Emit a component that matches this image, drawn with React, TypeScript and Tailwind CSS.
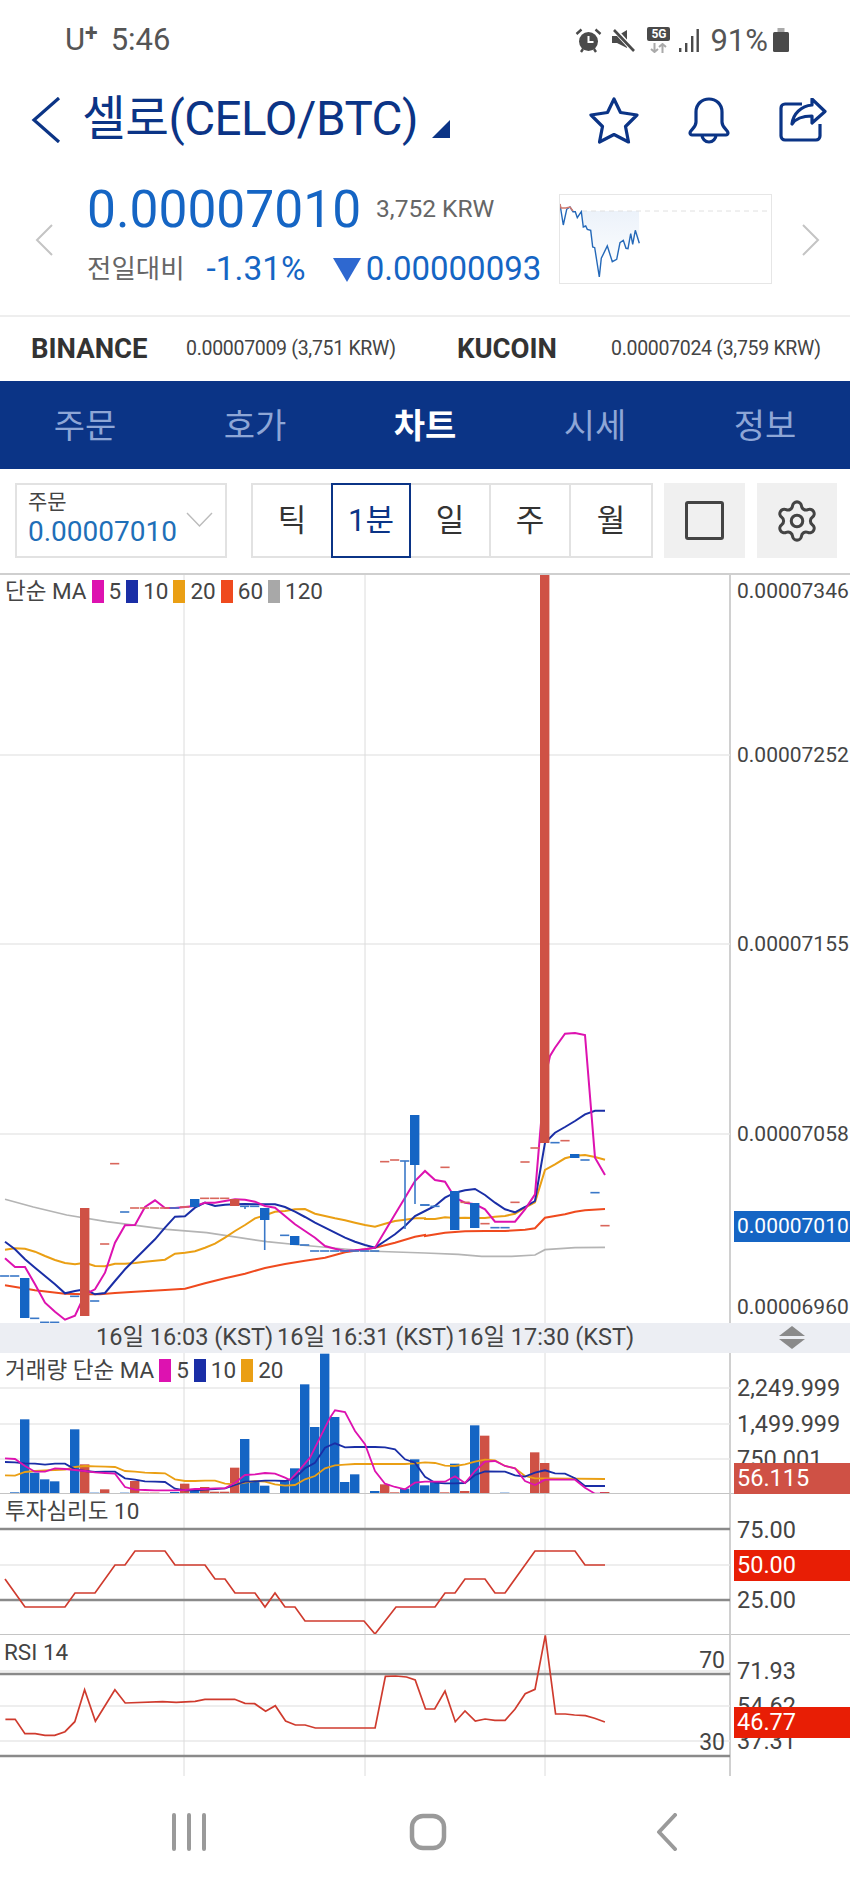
import { Settings } from "lucide-react";

const BLUE = "#1565c4";
const RED = "#cf5145";
const MA5 = "#dd12b0";
const MA10 = "#1a2ea6";
const MA20 = "#ea9f14";
const MA60 = "#ef4a1e";
const MA120 = "#b4b4b4";

type Pt = number[];

// chart points are read off the picture, each pane has its own scale
const main = (l: Pt[], r: Pt[] = []) => [
  ...l.map(([x, y]) => [x / 3, 1080 + y / 3]),
  ...r.map(([x, y]) => [425 + x / 3, 1000 + y / 3]),
];
const vol = (l: Pt[], r: Pt[] = []) => [
  ...l.map(([x, y]) => [x / 3, 1330 + y / 3]),
  ...r.map(([x, y]) => [425 + x / 3, 1330 + y / 3]),
];
const toPath = (p: number[][]) => p.map(([x, y]) => `${x.toFixed(1)},${y.toFixed(1)}`).join(" ");
const cx = (i: number) => 4.7 + 10 * i;

const priceMa5 = main(
  [[15,532],[45,558],[75,558],[105,610],[135,665],[165,692],[195,716],[225,704],[255,640],[285,625],[315,575],[345,485],[375,433],[405,432],[435,378],[465,358],[495,381],[525,381],[555,378],[585,375],[615,365],[645,365],[675,360],[705,355],[735,356],[765,362],[795,375],[825,380],[855,405],[885,430],[915,450],[945,470],[975,495],[1005,503],[1035,510],[1065,508],[1095,505],[1125,500],[1155,450],[1185,400],[1215,350],[1245,300],[1275,270]],
  [[0,510],[30,537],[60,542],[90,590],[120,605],[150,610],[180,625],[210,662],[240,662],[270,662],[300,625],[330,580],[345,400],[360,230],[375,165],[390,140],[420,98],[450,96],[480,102],[510,470],[540,522]]
);
const priceMa10 = main(
  [[15,482],[45,505],[75,535],[105,560],[135,585],[165,610],[195,637],[225,630],[255,625],[285,640],[315,636],[345,600],[375,565],[405,535],[435,505],[465,475],[495,440],[525,407],[555,406],[585,380],[615,365],[645,375],[675,371],[705,370],[735,369],[765,370],[795,370],[825,370],[855,378],[885,392],[915,408],[945,425],[975,440],[1005,455],[1035,470],[1065,482],[1095,492],[1125,500],[1155,480],[1185,460],[1215,435],[1245,405],[1275,390]],
  [[0,630],[30,615],[60,590],[90,575],[120,568],[150,564],[180,582],[210,605],[240,625],[270,634],[300,618],[330,600],[360,425],[390,395],[420,378],[450,360],[480,340],[510,329],[540,329]]
);
const priceMa20 = main(
  [[15,506],[45,502],[75,503],[105,512],[135,525],[165,537],[195,546],[225,550],[255,545],[285,555],[315,556],[345,548],[375,548],[405,546],[435,542],[465,539],[495,536],[525,518],[555,515],[585,511],[615,500],[645,488],[675,470],[705,450],[735,432],[765,412],[795,403],[825,392],[855,390],[885,385],[915,384],[945,398],[975,405],[1005,412],[1035,418],[1065,425],[1095,432],[1125,437],[1155,428],[1185,420],[1215,416],[1245,412],[1275,412]],
  [[0,654],[30,654],[60,649],[90,651],[120,650],[150,651],[180,651],[210,647],[240,645],[270,638],[300,620],[330,604],[360,507],[390,490],[420,472],[450,464],[480,462],[510,468],[540,476]]
);
const priceMa60 = main(
  [[15,613],[60,620],[105,628],[150,633],[195,638],[255,640],[300,640],[345,636],[405,632],[495,627],[555,623],[615,607],[675,592],[735,578],[795,561],[855,549],[915,539],[975,530],[1035,514],[1095,505],[1125,500],[1185,485],[1245,467],[1275,462]],
  [[0,705],[60,695],[120,691],[180,690],[240,690],[300,686],[330,682],[360,650],[420,640],[450,632],[480,628],[540,624]]
);
const priceMa120 = main(
  [[15,355],[100,378],[200,402],[320,422],[500,445],[620,455],[800,482],[900,492],[1100,510],[1275,516]],
  [[100,760],[170,766],[260,766],[330,762],[360,746],[450,740],[540,739]]
);

// x index, top, bottom
const candles: [number, number, number, string][] = [
  [2, 1277, 1317, BLUE],
  [8, 1207, 1315, RED],
  [19, 1198, 1206, BLUE],
  [23, 1198, 1205, RED],
  [26, 1207, 1219, BLUE],
  [29, 1235, 1244, BLUE],
  [41, 1114, 1164, BLUE],
  [45, 1190, 1229, BLUE],
  [47, 1202, 1227, BLUE],
  [54, 573, 1142, RED],
  [57, 1153, 1157, BLUE],
];
const wicks = [
  [264.7, 1207, 1249],
  [405, 1160, 1228],
  [415, 1164, 1203],
  [245, 1205, 1208],
];
const dashes: [number, number, string][] = [
  ...[[14,585],[44,585],[104,712],[134,724],[164,724],[224,646],[284,660],[374,393],[524,381],[734,376],[764,376],[854,463],[914,492],[944,510],[974,510],[1004,510],[1034,510],[1064,510],[1094,510],[1124,510],[1214,240],[1274,372]].map(
    ([x, y]) => [x / 3, 1080 + y / 3, "#3a78c8"] as [number, number, string]
  ),
  ...[[344,248],[314,489],[404,381],[434,381],[464,381],[494,381],[554,378],[614,352],[644,352],[674,352],[1154,242],[1184,237]].map(
    ([x, y]) => [x / 3, 1080 + y / 3, "#d9665b"] as [number, number, string]
  ),
  ...[[0,612],[30,616],[210,680],[240,680],[390,425],[480,477],[510,575]].map(
    ([x, y]) => [425 + x / 3, 1000 + y / 3, "#3a78c8"] as [number, number, string]
  ),
  ...[[60,499],[120,604],[180,668],[270,604],[300,483],[330,441],[420,419],[540,674]].map(
    ([x, y]) => [425 + x / 3, 1000 + y / 3, "#d9665b"] as [number, number, string]
  ),
];

const volumeBars: [number, number, string][] = [
  [1,484,BLUE],[2,265,BLUE],[3,425,BLUE],[4,445,BLUE],[5,451,BLUE],[7,295,BLUE],[8,400,RED],[9,485,BLUE],[10,475,RED],[12,485,BLUE],[13,450,RED],[14,485,RED],[15,485,RED],[17,483,BLUE],[18,458,RED],[19,478,BLUE],[20,468,RED],[21,482,RED],[22,482,RED],[23,410,RED],[24,324,BLUE],[25,452,BLUE],[26,464,BLUE],[28,448,BLUE],[29,412,BLUE],[30,160,BLUE],[31,288,BLUE],[32,68,BLUE],[33,258,BLUE],[34,453,BLUE],[35,430,BLUE],[37,480,BLUE],[38,460,RED],[39,484,RED],[40,473,BLUE],[41,385,BLUE],[42,463,BLUE],[43,450,BLUE],[44,484,RED],[45,398,BLUE],[46,480,RED],[47,283,BLUE],[48,314,RED],[49,486,BLUE],[50,485,BLUE],[53,364,RED],[54,396,RED],[55,488,BLUE],[57,488,BLUE],[58,488,BLUE],[59,488,BLUE],[60,483,RED],
];
const volMa5 = vol(
  [[15,382],[45,384],[75,405],[105,422],[135,422],[165,412],[195,414],[225,417],[255,420],[285,424],[315,426],[345,428],[375,468],[405,476],[435,477],[465,478],[495,478],[525,478],[555,477],[585,474],[615,474],[645,472],[675,472],[705,455],[735,432],[765,430],[795,426],[825,428],[855,440],[870,447],[900,415],[930,380],[960,320],[990,260],[1005,238],[1035,243],[1065,300],[1095,340],[1125,420],[1155,458],[1185,468],[1215,475],[1245,455],[1275,452]],
  [[30,452],[60,452],[90,436],[120,456],[150,420],[180,392],[210,390],[240,405],[270,412],[300,450],[330,462],[360,446],[450,446],[480,470],[510,488],[540,488]]
);
const volMa10 = vol(
  [[15,393],[45,394],[75,397],[105,398],[135,401],[165,398],[195,398],[225,415],[255,420],[285,423],[315,422],[345,422],[375,442],[405,446],[435,451],[465,452],[495,453],[525,473],[555,478],[585,478],[615,476],[645,474],[675,472],[705,462],[735,452],[765,451],[795,449],[825,449],[855,450],[885,440],[915,412],[945,395],[975,350],[1005,337],[1035,349],[1065,348],[1095,348],[1125,348],[1155,349],[1185,355],[1215,385],[1245,395],[1275,437]],
  [[30,455],[60,457],[90,457],[120,456],[150,432],[180,421],[240,422],[270,433],[300,437],[330,425],[360,418],[390,427],[420,428],[450,442],[480,465],[540,465]]
);
const volMa20 = vol(
  [[15,433],[45,434],[75,423],[105,420],[135,418],[165,417],[195,416],[225,408],[255,405],[285,406],[315,407],[345,408],[375,420],[405,422],[435,425],[465,426],[495,427],[525,445],[555,450],[585,450],[615,449],[645,449],[675,458],[705,460],[735,455],[765,450],[795,452],[825,460],[855,464],[885,462],[915,445],[945,435],[975,412],[1005,403],[1035,401],[1065,399],[1095,399],[1125,399],[1155,399],[1185,399],[1215,399],[1245,397],[1275,394]],
  [[30,396],[60,404],[90,405],[120,400],[150,392],[180,386],[210,388],[240,405],[270,412],[300,435],[330,442],[360,442],[540,444]]
);

const sentiment = [
  [5,1578],[25,1606],[65,1606],[75,1592],[95,1592],[115,1564],[125,1564],[135,1550],[165,1550],[175,1564],[205,1564],[215,1578],[225,1578],[235,1592],[255,1592],[265,1606],[275,1592],[285,1606],[295,1606],[305,1620],[364,1620],[375,1633],[396,1606],[435,1606],[445,1592],[455,1592],[465,1578],[485,1578],[495,1592],[505,1592],[535,1550],[575,1550],[585,1564],[605,1564],
];
const rsi = [
  [10,355],[28,355],[46,398],[65,398],[83,403],[101,403],[120,392],[138,362],[156,266],[176,361],[212,266],[231,306],[300,302],[325,304],[360,301],[378,295],[433,295],[452,307],[470,308],[490,331],[508,314],[527,360],[545,372],[563,372],[582,381],[692,381],[711,226],[730,225],[750,228],[766,237],[785,324],[802,324],[821,270],[840,362],[858,330],[877,360],[895,354],[913,358],[932,358],[950,325],[969,278],[987,265],[1006,103],[1025,339],[1043,339],[1060,342],[1080,344],[1097,352],[1116,363],
].map(([x, y]) => [x / 1.845, 1600 + y / 3]);

const spark = [
  [58,70],[68,132],[78,85],[88,78],[97,92],[104,92],[110,110],[122,92],[128,138],[135,135],[140,145],[150,148],[156,198],[162,200],[176,288],[182,232],[200,195],[215,242],[228,235],[238,185],[248,178],[256,202],[262,203],[270,158],[276,190],[284,148],[296,187],
].map(([x, y]) => [(x - 58) / 3, (y - 42) / 3]);

function Grid({ top, bottom, rows }: { top: number; bottom: number; rows: number[] }) {
  return (
    <g>
      {rows.map((y) => (
        <line key={y} x1="0" x2="730" y1={y} y2={y} stroke="#e8e8e8" strokeWidth="1.5" />
      ))}
      {[184, 365, 545].map((x) => (
        <line key={x} x1={x} x2={x} y1={top} y2={bottom} stroke="#dcdcdc" strokeWidth="1" />
      ))}
    </g>
  );
}

function Legend({ items }: { items: [string, string][] }) {
  return (
    <>
      {items.map(([color, label]) => (
        <span key={label} className="flex items-center">
          <span className="mx-[5px] h-[23px] w-[12px]" style={{ backgroundColor: color }} />
          {label}
        </span>
      ))}
    </>
  );
}

function AxisLabel({ top, small, children }: { top: number; small?: boolean; children: string }) {
  return (
    <span
      className={`absolute left-[6px] leading-[26px] text-[#444] ${small ? "text-[21px]" : "text-[23.5px]"}`}
      style={{ top: top - 13 }}
    >
      {children}
    </span>
  );
}

function Tag({ top, color, small, children }: { top: number; color: string; small?: boolean; children: string }) {
  return (
    <span
      className={`absolute left-[3px] right-0 flex h-[31px] items-center pl-[3px] text-white ${small ? "text-[21px]" : "text-[23.5px]"}`}
      style={{ top, backgroundColor: color }}
    >
      {children}
    </span>
  );
}

export default function App() {
  return (
    <div className="h-[1889px] w-[850px] overflow-hidden bg-white [font-family:Roboto,'Noto_Sans_CJK_KR',sans-serif]">
      {/* Status bar */}
      <div className="flex h-[80px] items-center justify-between pl-[65px] pr-[61px] text-[#555]">
        <div className="flex items-center text-[31px]">
          <span>U</span>
          <span className="mb-[12px] text-[23px] font-bold">+</span>
          <span className="ml-[13px]">5:46</span>
        </div>
        <div className="flex items-center">
          <svg width="27" height="25" viewBox="0 0 27 25" fill="#4a4a4a">
            <circle cx="13.5" cy="13.5" r="9.5" />
            <path d="M13.5 8v6h5" stroke="#fff" strokeWidth="2" fill="none" />
            <path d="M1.5 6l5-4.5M25.5 6l-5-4.5M6 24l2-3M21 24l-2-3" stroke="#4a4a4a" strokeWidth="2.4" fill="none" />
          </svg>
          <svg className="ml-[10px]" width="23" height="23" viewBox="0 0 23 23" fill="#4a4a4a">
            <path d="M0 7h5L15 1v18L5 14H0z" />
            <path d="M2 0l20 22" stroke="#fff" strokeWidth="5" />
            <path d="M2 1l20 21" stroke="#4a4a4a" strokeWidth="2.6" />
          </svg>
          <div className="ml-[12px] flex w-[23px] flex-col items-center">
            <span className="flex h-[14px] w-[23px] items-center justify-center rounded-[2px] bg-[#4a4a4a] text-[12px] font-bold leading-none text-white">
              5G
            </span>
            <svg className="mt-[2px]" width="17" height="10" viewBox="0 0 17 10" fill="none" stroke="#aaa" strokeWidth="2">
              <path d="M4.5 0v9M1 6l3.5 3L8 6M12.5 10V1M9 4l3.5-3L16 4" />
            </svg>
          </div>
          <svg className="ml-[9px]" width="20" height="25" viewBox="0 0 20 25" fill="#4a4a4a">
            <rect x="0" y="20" width="2.4" height="4" />
            <rect x="6" y="15" width="2.4" height="9" />
            <rect x="12" y="8" width="2.4" height="16" />
            <rect x="17.5" y="1" width="2.4" height="23" />
          </svg>
          <span className="ml-[11px] text-[31px] leading-none">91%</span>
          <svg className="ml-[5px]" width="16" height="24" viewBox="0 0 16 24" fill="#4a4a4a">
            <rect x="4.5" y="0" width="7" height="4" fill="#aaa" />
            <rect x="0" y="4" width="16" height="20" rx="1.5" />
          </svg>
        </div>
      </div>

      {/* Title */}
      <div className="flex h-[80px] items-center pl-[31px] pr-[23px] text-[#0b3486]">
        <svg width="30" height="46" viewBox="0 0 30 46" fill="none" stroke="currentColor" strokeWidth="3.2">
          <path d="M28 1L3 23l25 22" />
        </svg>
        <span className="ml-[21px] text-[47.5px] leading-none tracking-[-0.5px]">셀로(CELO/BTC)</span>
        <span className="ml-[14px] mt-[18px] h-0 w-0 border-b-[18px] border-l-[18px] border-b-[#0b3486] border-l-transparent" />
        <svg className="ml-auto" width="50" height="47" viewBox="0 0 50 47" fill="none" stroke="currentColor" strokeWidth="3.2" strokeLinejoin="round">
          <path d="M25 2l6.5 13.5L48 18 36.5 29.5 39.5 45 25 37.5 10.5 45l3-15.5L2 18l16.5-2.5z" />
        </svg>
        <svg className="ml-[48px]" width="44" height="47" viewBox="0 0 44 47" fill="none" stroke="currentColor" strokeWidth="3.2" strokeLinejoin="round">
          <path d="M3 36c0-3 6-5 6-11V15C9 7 15 2 22 2s13 5 13 13v10c0 6 6 8 6 11 0 1-1 2-2 2H5c-1 0-2-1-2-2z" />
          <path d="M15 38a7 7 0 0 0 14 0" />
        </svg>
        <svg className="ml-[48px]" width="48" height="44" viewBox="0 0 48 44" fill="none" stroke="currentColor" strokeWidth="3.2" strokeLinejoin="round">
          <path d="M23 6H6a4 4 0 0 0-4 4v28a4 4 0 0 0 4 4h31a4 4 0 0 0 4-4V26" />
          <path d="M33 1l13 12.5L33 25v-7c-9 0-16 2-20 8 1-10 9-18 20-19z" />
        </svg>
      </div>

      {/* Price */}
      <div className="flex h-[157px] items-center border-b-2 border-[#eee] pb-[3px]">
        <svg className="ml-[35px] mt-[7px]" width="18" height="32" viewBox="0 0 18 32" fill="none" stroke="#c4c4c4" strokeWidth="2">
          <path d="M17 1L2 16l15 15" />
        </svg>
        <div className="-mt-[4px] ml-[34px] w-[472px]">
          <div className="flex items-center">
            <span className="text-[51.5px] leading-[60px] text-[#1565c4]">0.00007010</span>
            <span className="ml-[15px] text-[24.5px] text-[#666]">3,752 KRW</span>
          </div>
          <div className="mt-[9px] flex items-center">
            <span className="text-[26.5px] leading-[40px] text-[#666]">전일대비</span>
            <span className="ml-[22px] text-[33.5px] leading-[40px] text-[#1565c4]">-1.31%</span>
            <span className="ml-[27px] mt-[2px] h-0 w-0 border-l-[14px] border-r-[14px] border-t-[24px] border-l-transparent border-r-transparent border-t-[#2e68d0]" />
            <span className="ml-[5px] text-[33px] leading-[40px] text-[#1565c4]">0.00000093</span>
          </div>
        </div>
        <div className="mt-[5px] h-[90px] w-[213px] border border-[#e6e6e6]">
          <svg width="211" height="88" viewBox="0 0 211 88">
            <defs>
              <linearGradient id="sparkFill" x1="0" x2="0" y1="0" y2="1">
                <stop offset="0" stopColor="#ecf2fa" />
                <stop offset="1" stopColor="#ffffff" />
              </linearGradient>
            </defs>
            <polygon points={`21,16 ${toPath(spark.slice(8))} 79,16`} fill="url(#sparkFill)" />
            <line x1="22" x2="210" y1="16" y2="16" stroke="#e0e0e0" strokeWidth="1" strokeDasharray="5 4" />
            <polyline points={toPath(spark)} fill="none" stroke="#2468b8" strokeWidth="1.4" />
            <polyline points="0,9 1,13 6,13 10,12 13,16" fill="none" stroke="#d0786c" strokeWidth="1.4" />
          </svg>
        </div>
        <svg className="ml-[30px] mt-[7px]" width="18" height="32" viewBox="0 0 18 32" fill="none" stroke="#c4c4c4" strokeWidth="2">
          <path d="M1 1l15 15L1 31" />
        </svg>
      </div>

      {/* Exchanges */}
      <div className="flex h-[64px] items-center text-[#444]">
        <span className="ml-[31px] w-[155px] text-[27.5px] font-bold text-[#333]">BINANCE</span>
        <span className="w-[271px] text-[19.5px] tracking-[-0.3px]">0.00007009 (3,751 KRW)</span>
        <span className="w-[154px] text-[27.5px] font-bold text-[#333]">KUCOIN</span>
        <span className="text-[19.5px] tracking-[-0.3px]">0.00007024 (3,759 KRW)</span>
      </div>

      {/* Tabs */}
      <div className="flex h-[88px] items-center bg-[#0b3486] pt-[2px] text-center text-[34px] text-[#8ea6d6]">
        <span className="flex-1">주문</span>
        <span className="flex-1">호가</span>
        <span className="flex-1 font-bold text-white">차트</span>
        <span className="flex-1">시세</span>
        <span className="flex-1">정보</span>
      </div>

      {/* Toolbar */}
      <div className="flex h-[104px] items-start pl-[15px] pt-[14px]">
        <div className="relative h-[75px] w-[212px] border-2 border-[#e2e2e2] pl-[11px] pt-[4px]">
          <div className="text-[21px] leading-[26px] text-[#444]">주문</div>
          <div className="text-[28px] leading-[34px] text-[#1f6fb8]">0.00007010</div>
          <svg className="absolute right-[12px] top-[27px]" width="27" height="16" viewBox="0 0 27 16" fill="none" stroke="#bbb" strokeWidth="1.4">
            <path d="M1 1l12.5 13L26 1" />
          </svg>
        </div>
        <div className="ml-[24px] flex h-[75px] w-[402px] border-2 border-[#e2e2e2] text-center text-[31px] leading-[71px] text-[#333]">
          <span className="w-[78px]">틱</span>
          <span className="-my-[2px] w-[80px] border-2 border-[#0b3486] leading-[71px] text-[#0b3486]">1분</span>
          <span className="w-[80px] border-r-2 border-[#e2e2e2]">일</span>
          <span className="w-[80px] border-r-2 border-[#e2e2e2]">주</span>
          <span className="flex-1">월</span>
        </div>
        <div className="ml-[11px] flex h-[75px] w-[81px] items-center justify-center bg-[#f0f0f0]">
          <span className="h-[39px] w-[39px] rounded-[3px] border-[3px] border-[#444]" />
        </div>
        <div className="ml-[12px] flex h-[75px] w-[80px] items-center justify-center bg-[#f0f0f0]">
          <Settings className="text-[#444]" size={46} strokeWidth={1.6} />
        </div>
      </div>

      {/* Chart */}
      <div className="border-t-2 border-[#cfcfcf] text-[#444]">
        <div className="flex h-[748px]">
          <div className="relative w-[731px] border-r-2 border-[#d0d0d0]">
            <svg className="absolute left-0 top-0" width="730" height="748" viewBox="0 574 730 748">
              <Grid top={574} bottom={1322} rows={[754, 943, 1133]} />
              <polyline points={toPath(priceMa120)} fill="none" stroke={MA120} strokeWidth="1.7" />
              <polyline points={toPath(priceMa60)} fill="none" stroke={MA60} strokeWidth="2" />
              <polyline points={toPath(priceMa20)} fill="none" stroke={MA20} strokeWidth="2" />
              <polyline points={toPath(priceMa10)} fill="none" stroke={MA10} strokeWidth="2" />
              <polyline points={toPath(priceMa5)} fill="none" stroke={MA5} strokeWidth="2" />
              {wicks.map(([x, y1, y2]) => (
                <line key={x} x1={x} x2={x} y1={y1} y2={y2} stroke="#3a78c8" strokeWidth="1.6" />
              ))}
              {dashes.map(([x, y, color]) => (
                <rect key={`${x}-${y}`} x={x - 4.6} y={y - 0.8} width="9.2" height="1.6" fill={color} />
              ))}
              {candles.map(([i, top, bottom, color]) => (
                <rect key={i} x={cx(i) - 4.7} y={top} width="9.4" height={bottom - top} fill={color} />
              ))}
            </svg>
            <div className="absolute left-[5px] top-[3px] flex items-center text-[22.5px] leading-[26px]">
              단순 MA
              <Legend
                items={[
                  [MA5, "5"],
                  [MA10, "10"],
                  [MA20, "20"],
                  [MA60, "60"],
                  ["#a8a8a8", "120"],
                ]}
              />
            </div>
          </div>
          <div className="relative flex-1">
            <AxisLabel small top={16}>0.00007346</AxisLabel>
            <AxisLabel small top={180}>0.00007252</AxisLabel>
            <AxisLabel small top={369}>0.00007155</AxisLabel>
            <AxisLabel small top={559}>0.00007058</AxisLabel>
            <AxisLabel small top={732}>0.00006960</AxisLabel>
            <Tag small top={636} color={BLUE}>
              0.00007010
            </Tag>
          </div>
        </div>

        {/* Time axis */}
        <div className="relative flex h-[30px] items-center bg-[#eceef3] pl-[96px] text-[23.5px]">
          <span className="w-[181px]">16일 16:03 (KST)</span>
          <span className="w-[180px]">16일 16:31 (KST)</span>
          <span>16일 17:30 (KST)</span>
          <span className="absolute right-[45px] top-[3px] flex flex-col items-center gap-[3px]">
            <span className="h-0 w-0 border-b-[10px] border-l-[13px] border-r-[13px] border-b-[#8a8a8a] border-l-transparent border-r-transparent" />
            <span className="h-0 w-0 border-l-[13px] border-r-[13px] border-t-[10px] border-l-transparent border-r-transparent border-t-[#8a8a8a]" />
          </span>
        </div>

        {/* Volume */}
        <div className="flex h-[141px]">
          <div className="relative w-[731px] border-r-2 border-[#d0d0d0]">
            <svg className="absolute left-0 top-0" width="730" height="141" viewBox="0 1352 730 141">
              <Grid top={1352} bottom={1493} rows={[1387, 1423, 1458]} />
              {volumeBars.map(([i, top, color]) => {
                const y = 1330 + top / 3;
                return <rect key={i} x={cx(i) - 4.7} y={y} width="9.4" height={1493 - y} fill={color} />;
              })}
              <polyline points={toPath(volMa20)} fill="none" stroke={MA20} strokeWidth="1.8" />
              <polyline points={toPath(volMa10)} fill="none" stroke={MA10} strokeWidth="1.8" />
              <polyline points={toPath(volMa5)} fill="none" stroke={MA5} strokeWidth="1.8" />
              <line x1="0" x2="730" y1="1492.5" y2="1492.5" stroke="#c4c4c4" strokeWidth="1" />
            </svg>
            <div className="absolute left-[5px] top-[4px] flex items-center text-[22.5px] leading-[26px]">
              거래량 단순 MA
              <Legend
                items={[
                  [MA5, "5"],
                  [MA10, "10"],
                  [MA20, "20"],
                ]}
              />
            </div>
          </div>
          <div className="relative flex-1 border-b border-[#c4c4c4]">
            <AxisLabel top={35}>2,249.999</AxisLabel>
            <AxisLabel top={71}>1,499.999</AxisLabel>
            <AxisLabel top={106}>750.001</AxisLabel>
            <Tag top={110} color={RED}>
              56.115
            </Tag>
          </div>
        </div>

        {/* Sentiment */}
        <div className="flex h-[141px]">
          <div className="relative w-[731px] border-r-2 border-[#d0d0d0]">
            <svg className="absolute left-0 top-0" width="730" height="141" viewBox="0 1493 730 141">
              <Grid top={1493} bottom={1634} rows={[1564]} />
              <line x1="0" x2="730" y1="1528" y2="1528" stroke="#8a8a8a" strokeWidth="2.4" />
              <line x1="0" x2="730" y1="1599" y2="1599" stroke="#8a8a8a" strokeWidth="2.4" />
              <polyline points={toPath(sentiment)} fill="none" stroke="#cf3b2e" strokeWidth="1.7" />
              <line x1="0" x2="730" y1="1633.5" y2="1633.5" stroke="#c4c4c4" strokeWidth="1" />
            </svg>
            <span className="absolute left-[5px] top-[4px] text-[22.5px] leading-[26px]">투자심리도 10</span>
          </div>
          <div className="relative flex-1 border-b border-[#c4c4c4]">
            <AxisLabel top={36}>75.00</AxisLabel>
            <AxisLabel top={106}>25.00</AxisLabel>
            <Tag top={56} color="#e81e05">
              50.00
            </Tag>
          </div>
        </div>

        {/* RSI */}
        <div className="flex h-[141px]">
          <div className="relative w-[731px] border-r-2 border-[#d0d0d0]">
            <svg className="absolute left-0 top-0" width="730" height="141" viewBox="0 1634 730 141">
              <Grid top={1634} bottom={1775} rows={[1670, 1705, 1740]} />
              <line x1="0" x2="730" y1="1673" y2="1673" stroke="#8a8a8a" strokeWidth="2.4" />
              <line x1="0" x2="730" y1="1755" y2="1755" stroke="#8a8a8a" strokeWidth="2.4" />
              <polyline points={toPath(rsi)} fill="none" stroke="#cf3b2e" strokeWidth="1.7" />
            </svg>
            <span className="absolute left-[4px] top-[4px] text-[22.5px] leading-[26px]">RSI 14</span>
            <span className="absolute right-[4px] top-[13px] text-[23px] leading-[26px]">70</span>
            <span className="absolute right-[4px] top-[95px] text-[23px] leading-[26px]">30</span>
          </div>
          <div className="relative flex-1">
            <AxisLabel top={36}>71.93</AxisLabel>
            <AxisLabel top={71}>54.62</AxisLabel>
            <AxisLabel top={106}>37.31</AxisLabel>
            <Tag top={72} color="#e81e05">
              46.77
            </Tag>
          </div>
        </div>
      </div>

      {/* Android nav */}
      <div className="flex h-[114px] items-center pb-[2px] text-[#9a9a9a]">
        <svg className="ml-[171px]" width="36" height="38" viewBox="0 0 36 38" fill="none" stroke="currentColor" strokeWidth="4" strokeLinecap="round">
          <path d="M3 2v34M18 2v34M33 2v34" />
        </svg>
        <svg className="ml-[202px]" width="38" height="38" viewBox="0 0 38 38" fill="none" stroke="currentColor" strokeWidth="4.5">
          <rect x="3" y="3" width="32" height="32" rx="11" />
        </svg>
        <svg className="ml-[209px]" width="22" height="38" viewBox="0 0 22 38" fill="none" stroke="currentColor" strokeWidth="4" strokeLinecap="round" strokeLinejoin="round">
          <path d="M19 2L3 19l16 17" />
        </svg>
      </div>
    </div>
  );
}
